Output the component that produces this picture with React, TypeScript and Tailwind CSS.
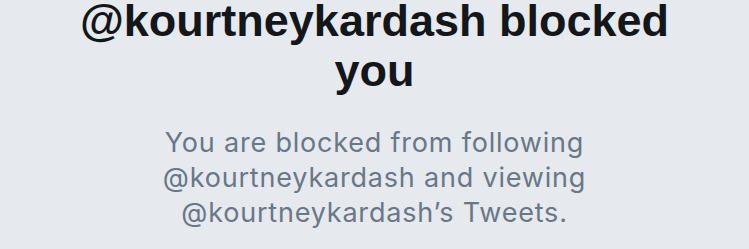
// Blocked profile notice
export default function App() {
  return (
    <div className="w-[749px] h-[249px] overflow-hidden bg-[#e6e9ee] flex flex-col items-center">
      <h1 className="mt-[-4px] text-center text-[45px] leading-[50px] font-bold text-[#14171a] font-['Liberation_Sans',Arial,sans-serif]">
        <span className="block">@kourtneykardash blocked</span>
        <span className="block">you</span>
      </h1>
      <p className="mt-[29px] text-center text-[27px] leading-[35px] tracking-[0.8px] text-[#697787] font-['Inter','Liberation_Sans',sans-serif]">
        <span className="block">You are blocked from following</span>
        <span className="block">@kourtneykardash and viewing</span>
        <span className="block">@kourtneykardash’s Tweets.</span>
      </p>
    </div>
  );
}
